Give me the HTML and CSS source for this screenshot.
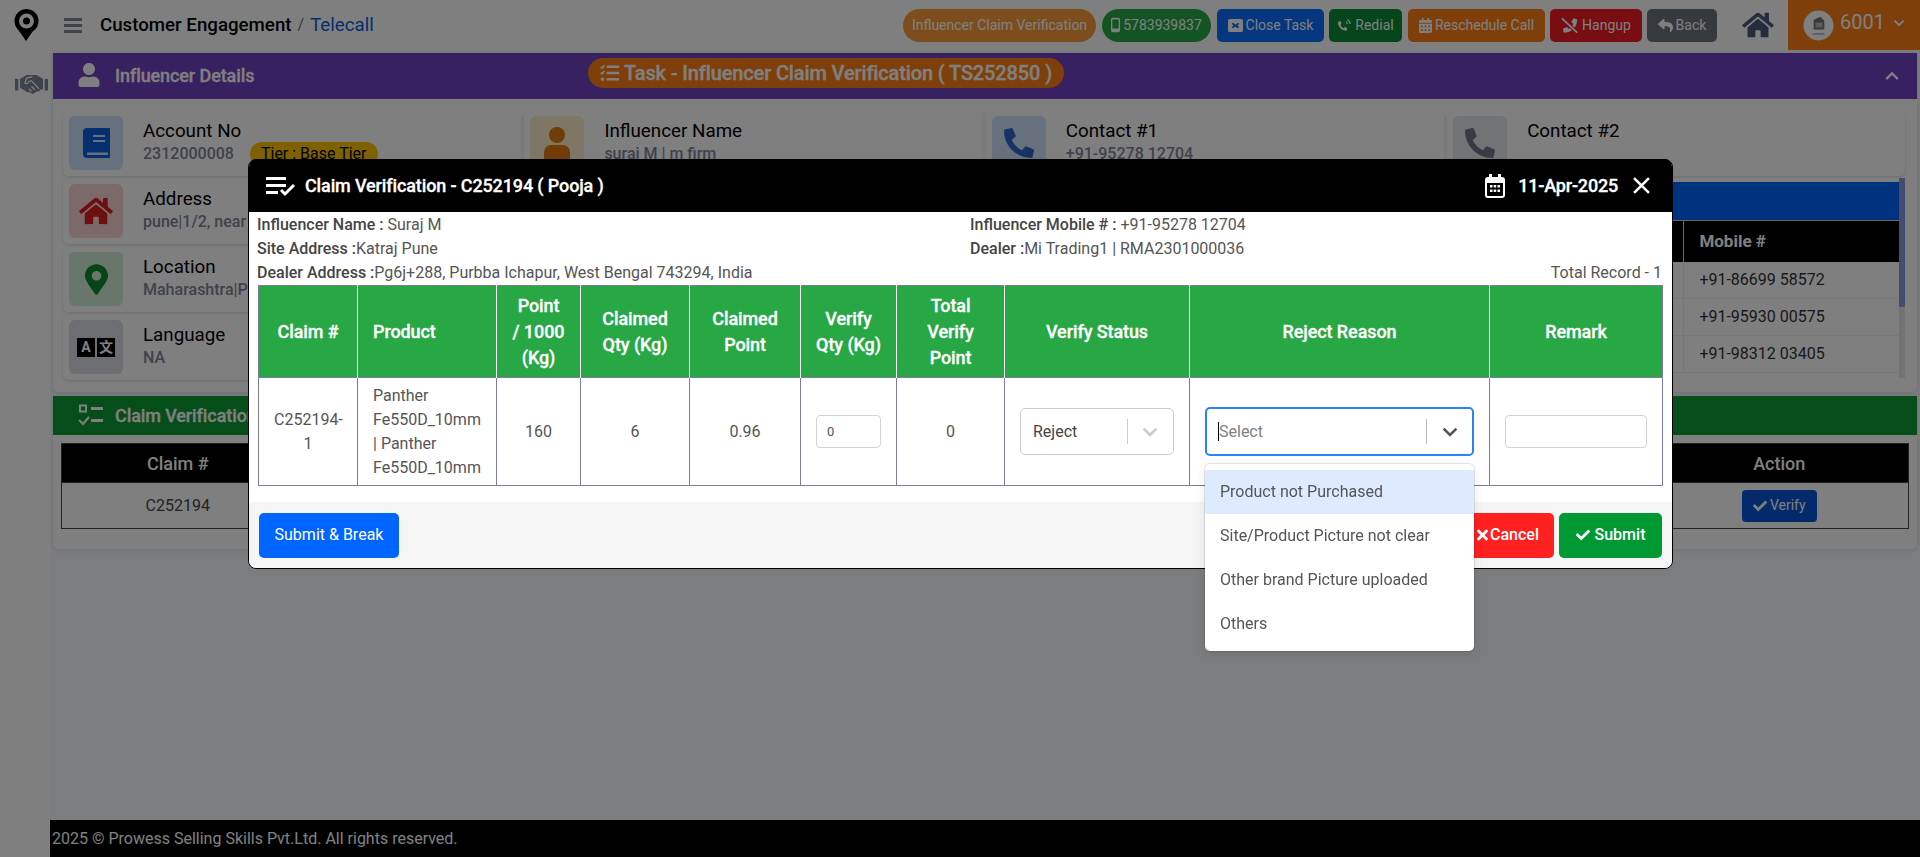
FILE: index.html
```html
<!DOCTYPE html>
<html lang="en">
<head>
<meta charset="utf-8">
<title>Customer Engagement / Telecall</title>
<link rel="stylesheet" href="styles.css">
</head>
<body>
<svg class="defs" width="0" height="0" aria-hidden="true">
  <symbol id="i-phone" viewBox="0 0 512 512"><path d="M497.39 361.8l-112-48a24 24 0 0 0-28 6.9l-49.6 60.6A370.66 370.66 0 0 1 130.6 204.11l60.6-49.6a23.94 23.94 0 0 0 6.9-28l-48-112A24.16 24.16 0 0 0 122.6.61l-104 24A24 24 0 0 0 0 48c0 256.5 207.9 464 464 464a24 24 0 0 0 23.4-18.6l24-104a24.29 24.29 0 0 0-14.01-27.6z"/></symbol>
  <symbol id="i-phone-flip" viewBox="0 0 512 512"><path transform="matrix(-1 0 0 1 512 0)" d="M497.39 361.8l-112-48a24 24 0 0 0-28 6.9l-49.6 60.6A370.66 370.66 0 0 1 130.6 204.11l60.6-49.6a23.94 23.94 0 0 0 6.9-28l-48-112A24.16 24.16 0 0 0 122.6.61l-104 24A24 24 0 0 0 0 48c0 256.5 207.9 464 464 464a24 24 0 0 0 23.4-18.6l24-104a24.29 24.29 0 0 0-14.01-27.6z"/></symbol>
  <symbol id="i-check" viewBox="0 0 512 512"><path d="M173.898 439.404l-166.4-166.4c-9.997-9.997-9.997-26.206 0-36.204l36.203-36.204c9.997-9.998 26.207-9.998 36.204 0L192 312.69 432.095 72.596c9.997-9.997 26.207-9.997 36.204 0l36.203 36.204c9.997 9.997 9.997 26.206 0 36.204l-294.4 294.401c-9.998 9.997-26.207 9.997-36.204-.001z"/></symbol>
  <symbol id="i-times" viewBox="0 0 352 512"><path d="M242.72 256l100.07-100.07c12.28-12.28 12.28-32.19 0-44.48l-22.24-22.24c-12.28-12.28-32.19-12.28-44.48 0L176 189.28 75.93 89.21c-12.28-12.28-32.19-12.28-44.48 0L9.21 111.45c-12.28 12.28-12.28 32.19 0 44.48L109.28 256 9.21 356.07c-12.28 12.28-12.28 32.19 0 44.48l22.24 22.24c12.28 12.28 32.2 12.28 44.48 0L176 322.72l100.07 100.07c12.28 12.28 32.2 12.28 44.48 0l22.24-22.24c12.28-12.28 12.28-32.19 0-44.48L242.72 256z"/></symbol>
  <symbol id="i-home" viewBox="0 0 576 512"><path d="M280.37 148.26L96 300.11V464a16 16 0 0 0 16 16l112.06-.29a16 16 0 0 0 15.92-16V368a16 16 0 0 1 16-16h64a16 16 0 0 1 16 16v95.64a16 16 0 0 0 16 16.05L464 480a16 16 0 0 0 16-16V300L295.67 148.26a12.19 12.19 0 0 0-15.3 0zM571.6 251.47L488 182.56V44.05a12 12 0 0 0-12-12h-56a12 12 0 0 0-12 12v72.61L318.47 43a48 48 0 0 0-61 0L4.34 251.47a12 12 0 0 0-1.6 16.9l25.5 31A12 12 0 0 0 45.15 301l235.22-193.74a12.19 12.19 0 0 1 15.3 0L530.9 301a12 12 0 0 0 16.9-1.6l25.5-31a12 12 0 0 0-1.7-16.93z"/></symbol>
  <symbol id="i-user" viewBox="0 0 448 512"><path d="M224 256c70.7 0 128-57.3 128-128S294.7 0 224 0 96 57.3 96 128s57.3 128 128 128zm89.6 32h-16.7c-22.2 10.2-46.9 16-72.9 16s-50.6-5.8-72.9-16h-16.7C60.2 288 0 348.2 0 422.4V464c0 26.5 21.5 48 48 48h352c26.5 0 48-21.5 48-48v-41.6c0-74.2-60.2-134.4-134.4-134.4z"/></symbol>
  <symbol id="i-pin" viewBox="0 0 384 512"><path d="M172.268 501.67C26.97 291.031 0 256.454 0 192 0 85.961 85.961 0 192 0s192 85.961 192 192c0 64.454-26.97 99.031-172.268 309.67-9.535 13.774-29.93 13.773-39.464 0zM192 272c44.183 0 80-35.817 80-80s-35.817-80-80-80-80 35.817-80 80 35.817 80 80 80z"/></symbol>
  <symbol id="i-reply" viewBox="0 0 512 512"><path d="M8.309 189.836L184.313 37.851C199.719 24.546 224 35.347 224 56.015v80.053c160.629 1.839 288 34.032 288 186.258 0 61.441-39.581 122.309-83.333 154.132-13.653 9.931-33.111-2.533-28.077-18.631 45.344-145.012-21.507-183.51-176.59-185.742V360c0 20.7-24.3 31.453-39.687 18.164l-176.004-152c-11.071-9.562-11.086-26.753 0-36.328z"/></symbol>
  <symbol id="i-cal" viewBox="0 0 448 512"><path d="M0 464c0 26.5 21.5 48 48 48h352c26.5 0 48-21.5 48-48V192H0v272zm320-196c0-6.6 5.4-12 12-12h40c6.6 0 12 5.4 12 12v40c0 6.6-5.4 12-12 12h-40c-6.6 0-12-5.4-12-12v-40zm0 128c0-6.6 5.4-12 12-12h40c6.6 0 12 5.4 12 12v40c0 6.6-5.4 12-12 12h-40c-6.6 0-12-5.4-12-12v-40zM192 268c0-6.6 5.4-12 12-12h40c6.6 0 12 5.4 12 12v40c0 6.6-5.4 12-12 12h-40c-6.6 0-12-5.4-12-12v-40zm0 128c0-6.6 5.4-12 12-12h40c6.6 0 12 5.4 12 12v40c0 6.6-5.4 12-12 12h-40c-6.6 0-12-5.4-12-12v-40zM64 268c0-6.6 5.4-12 12-12h40c6.6 0 12 5.4 12 12v40c0 6.6-5.4 12-12 12H76c-6.6 0-12-5.4-12-12v-40zm0 128c0-6.6 5.4-12 12-12h40c6.6 0 12 5.4 12 12v40c0 6.6-5.4 12-12 12H76c-6.6 0-12-5.4-12-12v-40zM400 64h-48V16c0-8.8-7.2-16-16-16h-32c-8.8 0-16 7.2-16 16v48H160V16c0-8.8-7.2-16-16-16h-32c-8.8 0-16 7.2-16 16v48H48C21.5 64 0 85.5 0 112v48h448v-48c0-26.5-21.5-48-48-48z"/></symbol>
  <symbol id="i-tasks" viewBox="0 0 24 24"><path d="M1 4.500l1.500 1.500 3-3.500" fill="none" stroke="currentColor" stroke-width="2"/><path d="M1 11.500l1.500 1.500 3-3.500" fill="none" stroke="currentColor" stroke-width="2"/><circle cx="3" cy="19.500" r="2"/><rect x="8" y="3" width="15" height="3"/><rect x="8" y="10.500" width="15" height="3"/><rect x="8" y="18" width="15" height="3"/></symbol>
  <symbol id="i-chev" viewBox="0 0 20 20"><path d="M4.500 7.500L10 13l5.500-5.500" fill="none" stroke="currentColor" stroke-width="2.600" stroke-linecap="square"/></symbol>
</svg>

<header class="topbar">
  <svg class="logo" viewBox="0 0 25 32"><circle cx="12.500" cy="12" r="12" fill="#000"/><path fill="#000" d="M3 19h18L12 32z"/><circle cx="12.500" cy="12" r="7.500" fill="#fff"/><circle cx="12.500" cy="12" r="3.500" fill="#000"/></svg>
  <div class="hamburger"><span></span><span></span><span></span></div>
  <div class="crumb"><strong>Customer Engagement</strong><span class="crumb-sep">/</span><a class="crumb-link">Telecall</a></div>
  <div class="actions">
    <span class="btn pill pill-orange">Influencer Claim Verification</span>
    <span class="btn pill pill-green"><svg class="ic-mobile" viewBox="0 0 10 16"><path fill="currentColor" fill-rule="evenodd" d="M2 0h6a2 2 0 0 1 2 2v12a2 2 0 0 1-2 2H2a2 2 0 0 1-2-2V2a2 2 0 0 1 2-2zm-.500 2v10h7V2z"/></svg>5783939837</span>
    <span class="btn btn-blue"><svg class="ic" viewBox="0 0 16 16"><path fill="currentColor" fill-rule="evenodd" d="M2 1h12a2 2 0 0 1 2 2v10a2 2 0 0 1-2 2H2a2 2 0 0 1-2-2V3a2 2 0 0 1 2-2zm3.200 4L4 6.200 5.800 8 4 9.800 5.200 11 8 9.200 10.800 11 12 9.800 10.200 8 12 6.200 10.800 5 8 6.800z"/></svg>Close Task</span>
    <span class="btn btn-green"><svg class="ic" viewBox="0 0 16 16"><use href="#i-phone" x="1" y="2" width="10" height="13" fill="currentColor"/><path d="M9.500 4a3 3 0 0 1 1.500 2.500M11 1.500a6 6 0 0 1 3 5" fill="none" stroke="currentColor" stroke-width="1.300"/></svg>Redial</span>
    <span class="btn btn-orange"><svg class="ic-cal" fill="currentColor"><use href="#i-cal"/></svg>Reschedule Call</span>
    <span class="btn btn-red"><svg class="ic-hang" viewBox="0 0 20 18"><use href="#i-phone-flip" x="2" y="1" width="16" height="16" fill="currentColor"/><path d="M1 1l17 16" stroke="#f01c24" stroke-width="4"/><path d="M1 1l17 16" stroke="currentColor" stroke-width="2"/></svg>Hangup</span>
    <span class="btn btn-grey"><svg class="ic" fill="currentColor"><use href="#i-reply"/></svg>Back</span>
    <svg class="home" fill="#4a5a78"><use href="#i-home"/></svg>
    <div class="user">
      <span class="avatar"><svg viewBox="0 0 32 32"><circle cx="16" cy="16" r="15.500" fill="#fff"/><path d="M11 10l7-3 4 4v9H11z" fill="#777"/><path d="M13 13h7v5h-7z" fill="#bbb"/><rect x="10" y="24" width="12" height="1.500" fill="#aaa"/></svg></span>
      <span class="user-no">6001</span>
      <svg class="user-chev"><use href="#i-chev"/></svg>
    </div>
  </div>
</header>

<div class="shell">
  <aside class="rail">
    <svg class="shake" viewBox="0 0 40 24"><path fill="#7c8598" d="M0 6h4v14H0zM36 6h4v14h-4z"/><path fill="#7c8598" d="M6 6l8-5h12l8 5v12l-3 1-2 2-3 0-2 2-3 1-3-2-3 0-8-5-1-1z"/><path fill="none" stroke="#fff" stroke-width="1.500" d="M21 3l-7 2-2 6c2 1 4 0 5-2l3-1 9 10M24 19l-4-4M20 21l-3-3"/></svg>
  </aside>
  <div class="main">
    <section class="panel">
      <div class="bar bar-purple">
        <div class="bar-title bar-title-up"><svg class="bar-user" fill="#fff"><use href="#i-user"/></svg><span>Influencer Details</span></div>
        <div class="task-pill"><svg class="pill-tasks"><use href="#i-tasks"/></svg>Task - Influencer Claim Verification ( TS252850 )</div>
        <svg class="bar-chev"><use href="#i-chev"/></svg>
      </div>
      <div class="details">
        <div class="card">
          <span class="tile tile-blue"><svg class="tile-book" viewBox="0 0 27 30"><path fill="#0d5fe0" fill-rule="evenodd" d="M4 0h23v30H4a4 4 0 0 1-4-4V4a4 4 0 0 1 4-4zm6 7v2h12V7zm0 5v2h12v-2zM4 24.500v2.500h21v-2.500z"/></svg></span>
          <div class="card-text"><div class="card-label">Account No</div><div class="card-value">2312000008<span class="tier">Tier : Base Tier</span></div></div>
        </div>
        <div class="card">
          <span class="tile tile-amber"><svg class="tile-user" viewBox="0 0 26 32"><circle cx="13" cy="8" r="8" fill="#e07a10"/><path fill="#e07a10" d="M7 18h12a7 7 0 0 1 7 7v7H0v-7a7 7 0 0 1 7-7z"/></svg></span>
          <div class="card-text"><div class="card-label">Influencer Name</div><div class="card-value">suraj M | m firm</div></div>
        </div>
        <div class="card">
          <span class="tile tile-sky"><svg class="tile-phone" fill="#2f66c8"><use href="#i-phone"/></svg></span>
          <div class="card-text"><div class="card-label">Contact #1</div><div class="card-value">+91-95278 12704</div></div>
        </div>
        <div class="card">
          <span class="tile tile-grey"><svg class="tile-phone" fill="#6e7888"><use href="#i-phone"/></svg></span>
          <div class="card-text"><div class="card-label">Contact #2</div></div>
        </div>
        <div class="card card-c1">
          <span class="tile tile-red"><svg class="tile-home" fill="#dc1c1c"><use href="#i-home"/></svg></span>
          <div class="card-text"><div class="card-label">Address</div><div class="card-value">pune|1/2, near</div></div>
        </div>
        <div class="contacts">
          <div class="contacts-body">
            <div class="contacts-bar"></div>
            <div class="contacts-head"><span class="contacts-col">Mobile #</span></div>
            <div class="contacts-row"><span class="contacts-col">+91-86699 58572</span></div>
            <div class="contacts-row"><span class="contacts-col">+91-95930 00575</span></div>
            <div class="contacts-row"><span class="contacts-col">+91-98312 03405</span></div>
          </div>
          <div class="track"><div class="thumb"></div></div>
        </div>
        <div class="card card-c1">
          <span class="tile tile-green"><svg class="tile-pin" fill="#0a8a2c"><use href="#i-pin"/></svg></span>
          <div class="card-text"><div class="card-label">Location</div><div class="card-value">Maharashtra|P</div></div>
        </div>
        <div class="card card-c1">
          <span class="tile tile-slate"><span class="lang"><b>A</b><b>文</b></span></span>
          <div class="card-text"><div class="card-label">Language</div><div class="card-value">NA</div></div>
        </div>
      </div>
    </section>
    <section class="panel panel-claim">
      <div class="bar bar-green">
        <div class="bar-title"><svg class="bar-list" viewBox="0 0 26 24"><path fill="none" stroke="#fff" stroke-width="2" d="M2 1.500h6v6H2zM1 16l4 4 6-7"/><path fill="#fff" d="M13 3h12v3H13zM13 15h12v3H13z"/></svg><span>Claim Verification</span></div>
      </div>
      <table class="back-table">
        <thead><tr><th class="back-a">Claim #</th><th></th><th class="back-c">Action</th></tr></thead>
        <tbody><tr><td>C252194</td><td></td><td><span class="verify"><svg class="verify-ic" fill="#fff"><use href="#i-check"/></svg>Verify</span></td></tr></tbody>
      </table>
    </section>
    <div class="spacer"></div>
    <footer class="footer">2025 © Prowess Selling Skills Pvt.Ltd. All rights reserved.</footer>
  </div>
</div>

<div class="backdrop"></div>
<div class="modal">
  <div class="modal-head">
    <svg class="head-list" viewBox="0 0 30 22"><path fill="#fff" d="M0 2h20v3H0zM0 9h20v3H0zM0 16h12v3H0z"/><path fill="none" stroke="#fff" stroke-width="3" d="M15 15l4 4 9-9"/></svg>
    <span class="modal-title">Claim Verification - C252194 ( Pooja )</span>
    <span class="modal-date"><svg class="head-cal" viewBox="0 0 20 24"><path fill="#fff" fill-rule="evenodd" d="M4 0h3v3h6V0h3v3h1a3 3 0 0 1 3 3v15a3 3 0 0 1-3 3H3a3 3 0 0 1-3-3V6a3 3 0 0 1 3-3h1zM2 9v12a1 1 0 0 0 1 1h14a1 1 0 0 0 1-1V9zM5 11h2.500v2.500H5zm3.700 0h2.500v2.500H8.700zm3.800 0H15v2.500h-2.500zM5 15.500h2.500V18H5zm3.700 0h2.500V18H8.700zm3.800 0H15V18h-2.500z"/></svg>11-Apr-2025</span>
    <svg class="head-x" viewBox="0 0 16 16"><path d="M1 1l14 14M15 1L1 15" stroke="#fff" stroke-width="2.400"/></svg>
  </div>
  <div class="modal-body">
    <div class="info"><div class="info-l"><b>Influencer Name :</b> Suraj M</div><div class="info-r"><b>Influencer Mobile # :</b> +91-95278 12704</div></div>
    <div class="info"><div class="info-l"><b>Site Address :</b>Katraj Pune</div><div class="info-r"><b>Dealer :</b>Mi Trading1 | RMA2301000036</div></div>
    <div class="info"><div class="info-l"><b>Dealer Address :</b>Pg6j+288, Purbba Ichapur, West Bengal 743294, India</div><div class="info-total">Total Record - 1</div></div>
    <table class="claim-table">
      <colgroup><col class="c1"><col class="c2"><col class="c3"><col class="c4"><col class="c5"><col class="c6"><col class="c7"><col class="c8"><col class="c9"><col class="c10"></colgroup>
      <thead>
        <tr><th>Claim #</th><th class="left">Product</th><th>Point<br>/ 1000<br>(Kg)</th><th>Claimed<br>Qty (Kg)</th><th>Claimed<br>Point</th><th>Verify<br>Qty (Kg)</th><th>Total<br>Verify<br>Point</th><th>Verify Status</th><th>Reject Reason</th><th>Remark</th></tr>
      </thead>
      <tbody>
        <tr>
          <td>C252194-<br>1</td>
          <td class="left">Panther Fe550D_10mm | Panther Fe550D_10mm</td>
          <td>160</td>
          <td>6</td>
          <td>0.96</td>
          <td><span class="field field-qty">0</span></td>
          <td>0</td>
          <td><div class="select"><span class="select-val">Reject</span><span class="select-sep"></span><svg class="select-chev"><use href="#i-chev"/></svg></div></td>
          <td class="reason-cell">
            <div class="select select-focus"><span class="caret"></span><span class="select-val select-ph">Select</span><span class="select-sep"></span><svg class="select-chev"><use href="#i-chev"/></svg></div>
            <ul class="menu">
              <li class="active">Product not Purchased</li>
              <li>Site/Product Picture not clear</li>
              <li>Other brand Picture uploaded</li>
              <li>Others</li>
            </ul>
          </td>
          <td><span class="field field-remark"></span></td>
        </tr>
      </tbody>
    </table>
  </div>
  <div class="modal-foot">
    <span class="mbtn mbtn-blue">Submit &amp; Break</span>
    <span class="foot-right">
      <span class="mbtn mbtn-red"><svg class="mbtn-x" fill="#fff"><use href="#i-times"/></svg>Cancel</span>
      <span class="mbtn mbtn-green"><svg class="mbtn-check" fill="#fff"><use href="#i-check"/></svg>Submit</span>
    </span>
  </div>
</div>
</body>
</html>
```

FILE: styles.css
```css
* { box-sizing: border-box; }
html, body { height: 100%; }
body {
  margin: 0;
  height: 857px;
  overflow: hidden;
  font: 16px/1.5 Roboto, "Liberation Sans", sans-serif;
  color: #212529;
  background: #fff;
  display: flex;
  flex-direction: column;
}
.defs { position: absolute; }

/* top bar */
.topbar { height: 50px; flex: none; display: flex; align-items: center; background: #fff; padding-left: 14px; }
.logo { width: 25px; height: 32px; flex: none; margin-right: 25px; }
.hamburger { width: 18px; display: flex; flex-direction: column; gap: 3px; margin-right: 18px; }
.hamburger span { height: 3px; background: #7a8499; display: block; }
.crumb { display: flex; align-items: center; font-size: 18.7px; }
.crumb strong { font-weight: 500; color: #000; }
.crumb-sep { margin: 0 6px; color: #6c757d; font-size: 16px; }
.crumb-link { color: #0d5cd8; }
.actions { margin-left: auto; display: flex; align-items: center; height: 50px; }
.btn {
  height: 33px; display: flex; align-items: center; justify-content: center;
  border-radius: 5px; color: #fff; font-size: 14px; margin-right: 5px; white-space: nowrap;
}
.pill { border-radius: 17px; }
.pill-orange { width: 193px; background: #fd9a3c; margin-right: 6px; }
.pill-green { width: 109px; background: #28a745; margin-right: 6px; }
.btn-blue { width: 107px; background: #0a6cff; }
.btn-green { width: 73px; background: #0a8a38; margin-right: 6px; }
.btn-orange { width: 137px; background: #fd7e14; }
.btn-red { width: 92px; background: #f01c24; margin-right: 5px; }
.btn-grey { width: 70px; background: #6c757d; margin-right: 25px; }
.ic { width: 15px; height: 15px; margin-right: 3px; flex: none; }
.ic-mobile { width: 9px; height: 16px; margin-right: 3px; flex: none; }
.ic-cal { width: 13px; height: 15px; margin-right: 3px; flex: none; }
.ic-hang { width: 18px; height: 17px; margin-right: 3px; flex: none; }
.home { width: 32px; height: 28px; margin-right: 14px; flex: none; }
.user { width: 132px; height: 50px; background: #fd7e14; display: flex; align-items: center; padding-left: 15px; color: #fff; }
.avatar { width: 31px; height: 31px; margin-right: 6px; display: block; flex: none; }
.avatar svg { display: block; width: 31px; height: 31px; }
.user-no { font-size: 20px; margin-top: -6px; }
.user-chev { width: 14px; height: 14px; margin-left: 7px; margin-top: -5px; color: #fff; }

/* shell */
.shell { flex: 1; display: flex; min-height: 0; }
.rail { width: 50px; flex: none; background: #fff; padding: 23px 0 0 15px; }
.shake { width: 33px; height: 22px; display: block; }
.main { flex: 1; display: flex; flex-direction: column; background: #f8fafc; padding: 3px 3px 0; min-width: 0; }
.panel { background: #fff; box-shadow: 0 1px 4px rgba(0,0,0,.12); padding-bottom: 12px; border-radius: 0 0 5px 5px; }
.panel-claim { margin-top: 4px; padding-bottom: 20px; }
.bar { height: 46px; display: flex; align-items: center; color: #fff; position: relative; }
.bar-purple { background: #6f42c1; }
.bar-green { height: 39px; background: #0a9a33; }
.bar-title { display: flex; align-items: center; font-size: 18px; font-weight: 500; padding-left: 25px; color: #fff; letter-spacing: -.1px; -webkit-text-stroke: .3px #fff; }
.bar-title-up { margin-top: -2px; }
.bar-user { width: 22px; height: 24px; margin-right: 15px; flex: none; }
.bar-list { width: 26px; height: 24px; margin-right: 11px; flex: none; }
.task-pill {
  position: absolute; left: 535px; top: 5px; height: 30px; width: 476px; border-radius: 15px;
  background: #fd7e14; display: flex; align-items: center; justify-content: center;
  font-size: 20px; font-weight: 500; white-space: nowrap; letter-spacing: -.13px; -webkit-text-stroke: .3px #fff;
}
.pill-tasks { width: 20px; height: 20px; margin-right: 4px; color: #fff; fill: #fff; }
.bar-chev { position: absolute; right: 16px; top: 14px; width: 18px; height: 18px; color: #fff; transform: rotate(180deg); }

.details {
  display: grid; grid-template-columns: repeat(4, 1fr); grid-auto-rows: 65px;
  gap: 3px 3.5px; padding: 12px 12px 0 10px;
}
.card { display: flex; padding: 5px 6px; border-radius: 5px; box-shadow: 0 1px 3px rgba(0,0,0,.15); background: #fff; min-width: 0; }
.card-c1 { grid-column: 1; }
.tile { width: 54px; height: 54px; border-radius: 6px; flex: none; display: flex; align-items: center; justify-content: center; }
.tile-blue { background: #cfe0fa; }
.tile-amber { background: #fdeecc; }
.tile-sky { background: #cfe0fa; }
.tile-grey { background: #e4e6ea; }
.tile-red { background: #f8d4d4; }
.tile-green { background: #d2ecd9; }
.tile-slate { background: #d8dce2; }
.tile-book { width: 27px; height: 30px; }
.tile-user { width: 26px; height: 32px; }
.tile-phone { width: 30px; height: 30px; }
.tile-home { width: 34px; height: 30px; }
.tile-pin { width: 23px; height: 31px; }
.lang { display: flex; gap: 2px; }
.lang b { width: 18px; height: 19px; background: #000; color: #fff; font-size: 14px; line-height: 19px; text-align: center; display: block; font-family: Roboto, "Noto Sans CJK SC", sans-serif; }
.card-text { padding: 2px 0 0 20px; min-width: 0; }
.card-label { font-size: 18.8px; line-height: 26px; color: #000; }
.card-value { font-size: 16px; line-height: 20px; font-weight: 500; color: #7c8498; white-space: nowrap; display: flex; align-items: center; }
.tier { margin: -2px 0 -2px 16px; background: #ffc107; color: #000; font-weight: 400; padding: 0 11px; border-radius: 12px; line-height: 24px; }

.contacts { grid-column: 2 / 5; grid-row: 2 / 5; display: flex; margin-top: -1px; height: 200px; }
.contacts-body { flex: 1; padding-top: 4px; min-width: 0; }
.contacts-bar { height: 38px; background: #0066ff; }
.contacts-head { height: 42px; background: #000; border-top: 1px solid #ccc; color: #fff; font-weight: 700; font-size: 17px; display: flex; align-items: center; }
.contacts-col { margin-left: 1159px; border-left: 1px solid #ccc; padding-left: 15px; height: 100%; display: flex; align-items: center; }
.contacts-row { height: 37px; border-bottom: 1px solid #eee; display: flex; align-items: center; color: #333; }
.contacts-row .contacts-col { border-left-color: #eee; }
.track { width: 6px; height: 200px; background: #e6e6e6; flex: none; }
.thumb { height: 129px; background: #8a98e0; }

.back-table { width: calc(100% - 16px); margin: 8px 8px 0; border-collapse: collapse; border: 1px solid #444; table-layout: fixed; }
.back-table th { background: #000; color: #fff; height: 39px; font-weight: 500; font-size: 18px; text-align: center; padding: 0; }
.back-table td { height: 46px; text-align: center; color: #444; padding: 0; border-top: 1px solid #444; }
.back-a { width: 232px; }
.back-c { width: 258px; }
.verify { display: inline-flex; align-items: center; justify-content: center; width: 75px; height: 32px; border-radius: 4px; background: #0a55d8; color: #fff; font-size: 14px; }
.verify-ic { width: 14px; height: 14px; margin-right: 3px; }
.spacer { flex: 1; }
.footer { height: 37px; flex: none; margin: 0 -3px; background: #000; color: #fff; padding: 0 0 0 2px; line-height: 37px; }

/* overlay */
.backdrop { position: fixed; inset: 0; background: rgba(0,0,0,.5); }
.modal { position: fixed; left: 248px; top: 159px; width: 1425px; background: #fff; border: 1px solid #000; border-radius: 8px; }
.modal-head { height: 53px; margin-top: -1px; background: #000; color: #fff; border-radius: 8px 8px 0 0; display: flex; align-items: center; padding: 0 22px 0 17px; }
.head-list { width: 30px; height: 22px; margin-right: 9px; }
.modal-title { font-size: 18px; font-weight: 500; letter-spacing: -.13px; -webkit-text-stroke: .3px #fff; }
.modal-date { margin-left: auto; display: flex; align-items: center; font-size: 18px; font-weight: 500; letter-spacing: -.2px; -webkit-text-stroke: .3px #fff; }
.head-cal { width: 20px; height: 24px; margin-right: 13px; }
.head-x { width: 17px; height: 17px; margin-left: 15px; }
.modal-body { padding: 1px 10px 0 8px; }
.info { display: flex; height: 24px; line-height: 24px; color: #555; }
.info b { font-weight: 500; color: #444; }
.info-l { width: 713px; flex: none; }
.info-total { margin-left: auto; }
.claim-table { width: 1404px; margin: 0 0 0 1px; table-layout: fixed; border-collapse: collapse; }
.c1 { width: 99px; } .c2 { width: 139px; } .c3 { width: 84px; } .c4 { width: 109px; } .c5 { width: 111px; }
.c6 { width: 96px; } .c7 { width: 108px; } .c8 { width: 185px; } .c9 { width: 300px; } .c10 { width: 173px; }
.claim-table th { height: 92px; background: #28a745; color: #fff; font-size: 18px; font-weight: 500; letter-spacing: -.1px; -webkit-text-stroke: .3px #fff; line-height: 26px; text-align: center; padding: 0 6px; border: 1px solid #fff; border-top: 1px solid #7a7d95; border-bottom: 0; }
.claim-table th:first-child { border-left-color: #7a7d95; }
.claim-table th:last-child { border-right-color: #7a7d95; }
.claim-table td { height: 108px; text-align: center; color: #555; line-height: 24px; padding: 0 15px; border: 1px solid #7a7d95; }
.claim-table .left { text-align: left; padding: 0 15px; }
.field { display: block; background: #fff; border: 1px solid #ced4da; border-radius: 4px; height: 33px; text-align: left; }
.field-qty { width: 65px; font-size: 13px; line-height: 31px; padding-left: 10px; margin: 0 auto; }
.field-remark { width: 142px; margin-left: 0; }
.select { height: 47px; border: 1px solid #ccc; border-radius: 5px; background: #fff; display: flex; align-items: center; padding: 0 13px 0 12px; text-align: left; position: relative; }
.select-val { flex: 1; color: #444; }
.select-sep { width: 1px; height: 25px; background: #ccc; flex: none; }
.select-chev { width: 20px; height: 20px; margin-left: 12px; color: #ccc; flex: none; }
.select-focus { height: 49px; border: 2px solid #2684ff; padding: 0 12px 0 11px; }
.select-focus .select-chev { color: #555; margin-left: 13px; }
.select-focus .select-sep { background: #bbb; }
.select-ph { color: #808080; }
.caret { width: 1px; height: 19px; background: #000; flex: none; }
.reason-cell { position: relative; }
.menu { position: absolute; left: 15px; right: 15px; top: 86px; margin: 0; padding: 6px 0 5px; list-style: none; background: #fff; border-radius: 5px; box-shadow: 0 0 0 1px rgba(0,0,0,.1), 0 4px 11px rgba(0,0,0,.1); text-align: left; z-index: 3; }
.menu li { height: 44px; line-height: 44px; padding-left: 15px; color: #555; }
.menu .active { background: #deebff; }

.modal-foot { margin-top: 16px; height: 66px; background: #f5f5f5; border-radius: 0 0 8px 8px; display: flex; align-items: center; justify-content: space-between; padding: 0 10px 0 10px; }
.foot-right { display: flex; gap: 5px; }
.mbtn { height: 45px; border-radius: 5px; color: #fff; font-weight: 500; display: inline-flex; align-items: center; justify-content: center; }
.mbtn-blue { width: 140px; background: #0066ff; font-weight: 400; }
.mbtn-red { width: 92px; background: #ff2020; }
.mbtn-green { width: 103px; background: #009933; }
.mbtn-x { width: 11px; height: 16px; margin-right: 2px; }
.mbtn-check { width: 14px; height: 14px; margin-right: 5px; }
```
